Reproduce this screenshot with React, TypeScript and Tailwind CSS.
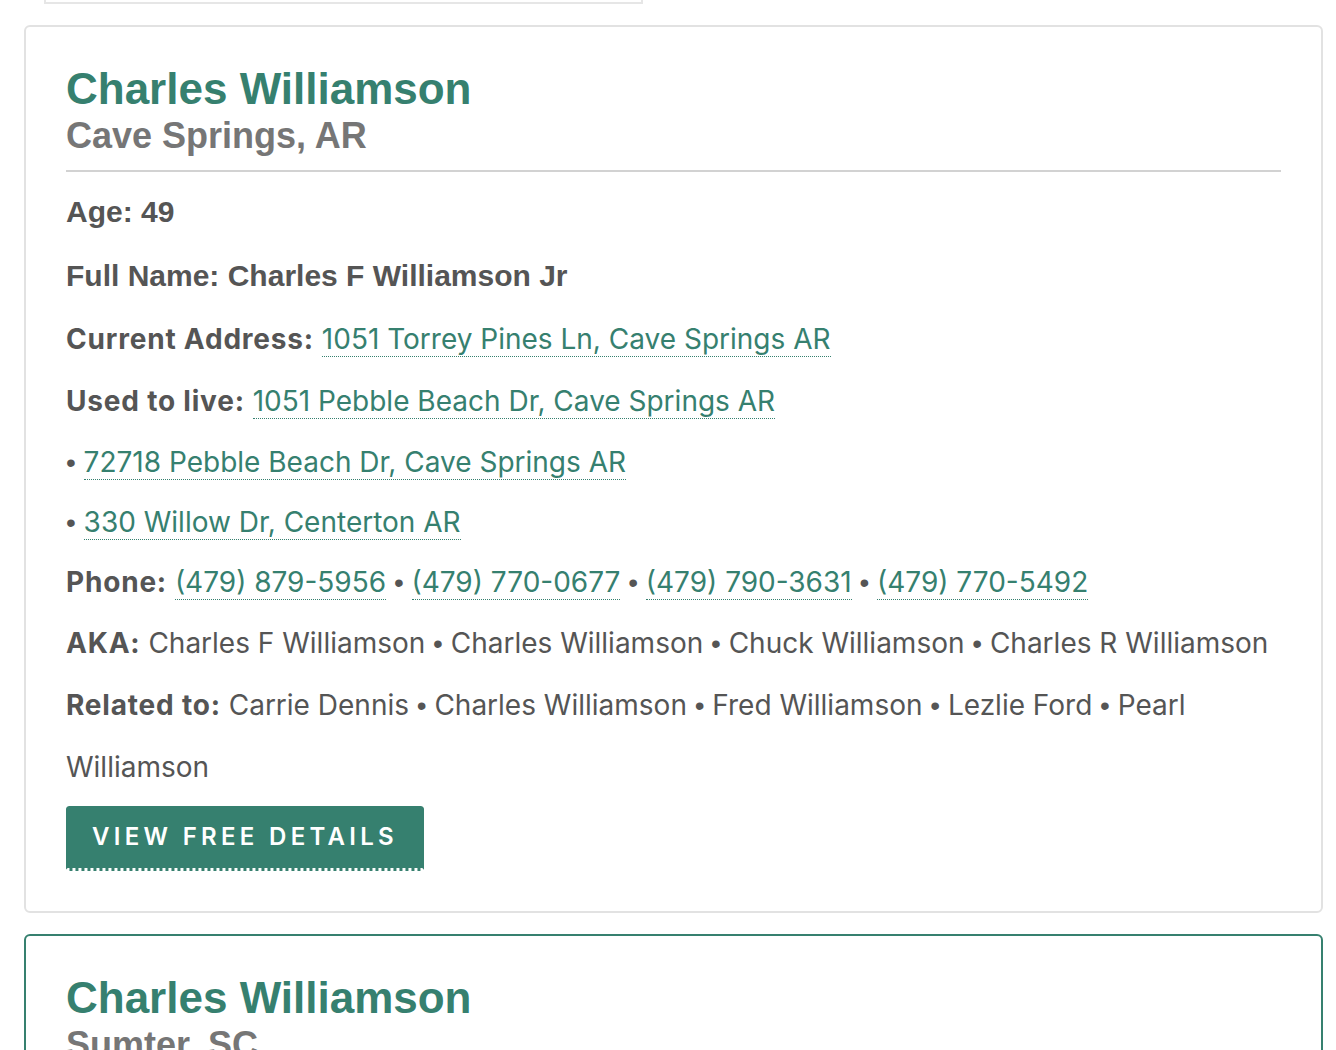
import type { ReactNode } from "react"

const sans = "font-['Inter','Noto_Sans',sans-serif]"
const helv = "font-['Liberation_Sans',Arial,sans-serif]"

function Addr({ children }: { children: ReactNode }) {
  return (
    <a href="#" className="text-[#36806f] border-b border-dotted border-[#36806f]">
      {children}
    </a>
  )
}

// narrower bullet separator, closer to the original system font
function Dot() {
  return <span className={"text-[#555] leading-none " + helv}> • </span>
}

function Label({ children }: { children: ReactNode }) {
  return <b className="font-bold tracking-[0.8px]">{children}</b>
}

interface Person {
  name: string
  city: string
  age: string
  fullName: string
  current: string
  past: string[]
  phones: string[]
  aka: string[]
  related: string[]
  active?: boolean
}

const people: Person[] = [
  {
    name: "Charles Williamson",
    city: "Cave Springs, AR",
    age: "49",
    fullName: "Charles F Williamson Jr",
    current: "1051 Torrey Pines Ln, Cave Springs AR",
    past: [
      "1051 Pebble Beach Dr, Cave Springs AR",
      "72718 Pebble Beach Dr, Cave Springs AR",
      "330 Willow Dr, Centerton AR",
    ],
    phones: ["(479) 879-5956", "(479) 770-0677", "(479) 790-3631", "(479) 770-5492"],
    aka: ["Charles F Williamson", "Charles Williamson", "Chuck Williamson", "Charles R Williamson"],
    related: ["Carrie Dennis", "Charles Williamson", "Fred Williamson", "Lezlie Ford", "Pearl Williamson"],
  },
  {
    name: "Charles Williamson",
    city: "Sumter, SC",
    age: "62",
    fullName: "Charles E Williamson",
    current: "2175 Kolb Rd, Sumter SC",
    past: ["410 W Liberty St, Sumter SC", "28 Church St, Sumter SC"],
    phones: ["(803) 773-2214", "(803) 469-0858"],
    aka: ["Charles E Williamson", "Chas Williamson"],
    related: ["Linda Williamson", "Mary Williamson"],
    active: true,
  },
]

function Names({ list }: { list: string[] }) {
  return (
    <>
      {list.map((n, i) => (
        <span key={i}>
          {i > 0 && <Dot />}
          {n}
        </span>
      ))}
    </>
  )
}

function Card({ p }: { p: Person }) {
  return (
    <div
      className={
        "mt-[21px] w-[1299px] rounded-[6px] border-2 bg-white px-[40px] pt-[40px] pb-[40px] " +
        (p.active ? "border-[#36806f]" : "border-[#e2e2e2]")
      }
    >
      <div className={"border-b-2 border-[#d2d2d2] pb-[16px] " + helv}>
        <h2 className="text-[44px] font-bold leading-none text-[#36806f]">{p.name}</h2>
        <h3 className="mt-[7px] text-[36px] font-bold leading-none text-[#767676]">{p.city}</h3>
      </div>

      <div className="mt-[8px] text-[#555]">
        <p className={"text-[30px] font-bold leading-[64px] " + helv}>Age: {p.age}</p>
        <p className={"text-[30px] font-bold leading-[64px] " + helv}>Full Name: {p.fullName}</p>

        <div className={"text-[28px] " + sans}>
          <p className="leading-[62px]">
            <Label>Current Address:</Label> <Addr>{p.current}</Addr>
          </p>
          <p className="leading-[62px]">
            <Label>Used to live:</Label> <Addr>{p.past[0]}</Addr>
          </p>
          {p.past.slice(1).map((a) => (
            <p key={a} className="leading-[60px]">
              <span className={"leading-none " + helv}>• </span>
              <Addr>{a}</Addr>
            </p>
          ))}
          <p className="leading-[60px]">
            <Label>Phone:</Label>{" "}
            {p.phones.map((ph, i) => (
              <span key={ph}>
                {i > 0 && <Dot />}
                <Addr>{ph}</Addr>
              </span>
            ))}
          </p>
          <p className="leading-[62px]">
            <Label>AKA:</Label> <Names list={p.aka} />
          </p>
          <p className="leading-[62px]">
            <Label>Related to:</Label> <Names list={p.related} />
          </p>
        </div>

        <a
          href="#"
          className={
            "mt-[8px] inline-flex h-[65px] w-[358px] items-center justify-center rounded-[3px] border-b-[3px] border-dotted border-[#36806f] bg-[#36806f] bg-clip-padding text-[24px] font-semibold tracking-[4.3px] text-white " +
            sans
          }
        >
          VIEW FREE DETAILS
        </a>
      </div>
    </div>
  )
}

export default function App() {
  return (
    <div className="min-h-screen bg-white pl-[24px]">
      <div className="ml-[20px] h-[4px] w-[599px] border-x-2 border-b-2 border-[#e6e6e6]" />
      {people.map((p, i) => (
        <Card key={i} p={p} />
      ))}
    </div>
  )
}
